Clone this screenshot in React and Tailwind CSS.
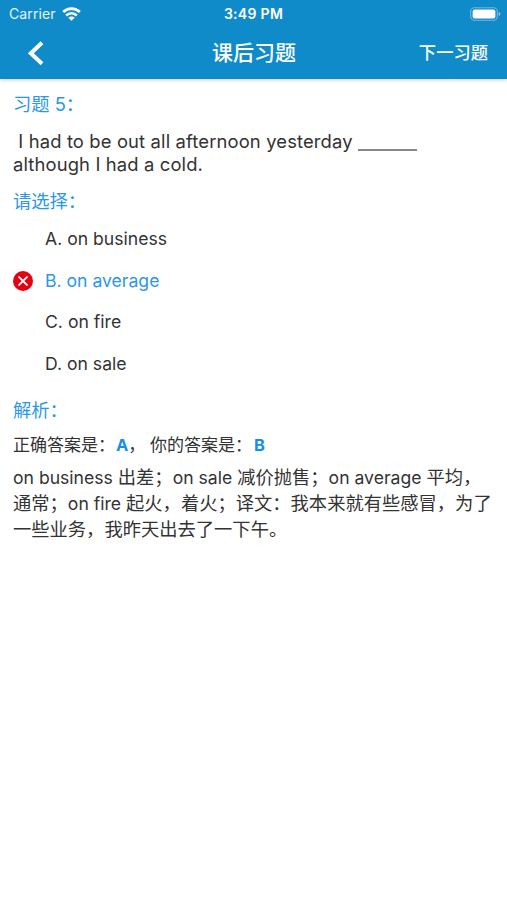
/**
 * ExercisePage
 * Shows one after-class exercise with its options, the chosen answer
 * and the explanation below.
 */

const OPTIONS = [
  { key: "A", text: "on business" },
  { key: "B", text: "on average" },
  { key: "C", text: "on fire" },
  { key: "D", text: "on sale" },
];

const CORRECT = "A";
const CHOSEN = "B";

const EXPLANATION = [
  "on business 出差；on sale 减价抛售；on average 平均，",
  "通常；on fire 起火，着火；译文：我本来就有些感冒，为了",
  "一些业务，我昨天出去了一下午。",
];

function WifiIcon() {
  return (
    <svg className="h-[14px] w-[19px]" viewBox="0 0 19 14" fill="none" aria-hidden="true">
      <path d="M1.2 5.1a11.8 11.8 0 0 1 16.6 0" stroke="white" strokeWidth="2.8" />
      <path d="M4.2 8.5a7.5 7.5 0 0 1 10.6 0" stroke="white" strokeWidth="2.5" />
      <path d="M9.5 13.8 6.4 10.8a4.3 4.3 0 0 1 6.2 0Z" fill="white" />
    </svg>
  );
}

function BatteryIcon() {
  return (
    <svg className="h-[14px] w-[31px]" viewBox="0 0 31 14" fill="none" aria-hidden="true">
      <rect x="0.7" y="0.7" width="26.6" height="12.6" rx="3.8" stroke="white" strokeOpacity="0.4" strokeWidth="1.1" />
      <rect x="2.6" y="2.5" width="22.8" height="9" rx="2.2" fill="white" />
      <path d="M28.7 5v4c1-.4 1.6-1.1 1.6-2s-.6-1.6-1.6-2Z" fill="white" fillOpacity="0.5" />
    </svg>
  );
}

function WrongIcon() {
  return (
    <svg className="h-5 w-5" viewBox="0 0 20 20" aria-hidden="true">
      <circle cx="10" cy="10" r="10" fill="#e60012" />
      <path d="m6.1 6.1 7.8 7.8m0-7.8-7.8 7.8" stroke="white" strokeWidth="1.9" strokeLinecap="round" />
    </svg>
  );
}

function StatusBar() {
  return (
    <div className="grid h-[27px] grid-cols-[1fr_auto_1fr] items-center pl-[9px] pr-[6px]">
      <div className="flex items-center gap-[6px]">
        <span className="text-[14px] tracking-[0.1px] text-white/90">Carrier</span>
        <WifiIcon />
      </div>
      <span className="pr-[3px] text-[14px] font-semibold tracking-[0.3px]">3:49 PM</span>
      <div className="flex justify-end">
        <BatteryIcon />
      </div>
    </div>
  );
}

function NavBar() {
  return (
    <div className="grid h-[52px] grid-cols-[1fr_auto_1fr] items-center pl-[27px] pr-[19px]">
      <button className="w-[17px]" aria-label="Back">
        <svg className="h-[25px] w-[17px]" viewBox="0 0 17 25" fill="none">
          <path d="M15 1.8 3.8 12.2 15 22.8" stroke="white" strokeWidth="4" />
        </svg>
      </button>
      <h1 className="pr-[7px] text-[21px] leading-[26px] font-medium">课后习题</h1>
      <button className="text-right text-[17.3px] font-medium">下一习题</button>
    </div>
  );
}

function Option({ option }) {
  const chosen = option.key === CHOSEN;
  return (
    <li className="flex h-[41.6px] items-center">
      <span className="w-8">{chosen && <WrongIcon />}</span>
      <span className={chosen ? "text-[#2b97e8]" : ""}>
        {option.key}. {option.text}
      </span>
    </li>
  );
}

// Latin words are set slightly smaller than the Chinese around them
function MixedLine({ text }) {
  return (
    <p className="h-[26px] whitespace-pre">
      {text.split(/([a-z ]+)/).map((part, i) =>
        i % 2 ? (
          <span key={i} className="text-[17.6px] leading-none">
            {part}
          </span>
        ) : (
          part
        )
      )}
    </p>
  );
}

export default function App() {
  return (
    <div className="min-h-[900px] bg-white font-['Inter','Noto_Sans_CJK_SC',sans-serif] text-[#333333]">
      <header className="h-[79px] bg-[#108bca] text-white shadow-[0_1px_4px_rgba(0,0,0,0.2)]">
        <StatusBar />
        <NavBar />
      </header>

      <main className="px-[13px] pt-[12px] text-[17.6px]">
        <h2 className="h-[26px] text-[18.3px] leading-[26px] text-[#2b97e8]">习题 5：</h2>

        {/* Question */}
        <p className="mt-[13px] h-[46px] whitespace-pre text-[18.4px] leading-[23px] tracking-[0.14px]">
          {" I had to be out all afternoon yesterday "}
          <span className="inline-block h-[18px] w-[59px] border-b-2 border-[#888888] align-[-3px]" />
          {"\nalthough I had a cold."}
        </p>

        <h2 className="mt-[12px] h-[26px] text-[18.3px] leading-[26px] text-[#2b97e8]">请选择：</h2>
        <ul className="mt-[4.5px]">
          {OPTIONS.map((option) => (
            <Option key={option.key} option={option} />
          ))}
        </ul>

        {/* Explanation */}
        <h2 className="mt-[12.5px] h-[26px] text-[18.3px] leading-[26px] text-[#2b97e8]">解析：</h2>
        <p className="mt-[9px] h-[26px] whitespace-pre text-[17px] leading-[26px]">
          正确答案是：<b className="ml-px text-[16.5px] text-[#1590ea]">{CORRECT}</b>
          {"， 你的答案是："}
          <b className="ml-[2px] text-[16.5px] text-[#1590ea]">{CHOSEN}</b>
        </p>
        <div className="mt-[6px] text-[18.3px] leading-[26px]">
          {EXPLANATION.map((line) => (
            <MixedLine key={line} text={line} />
          ))}
        </div>
      </main>
    </div>
  );
}
